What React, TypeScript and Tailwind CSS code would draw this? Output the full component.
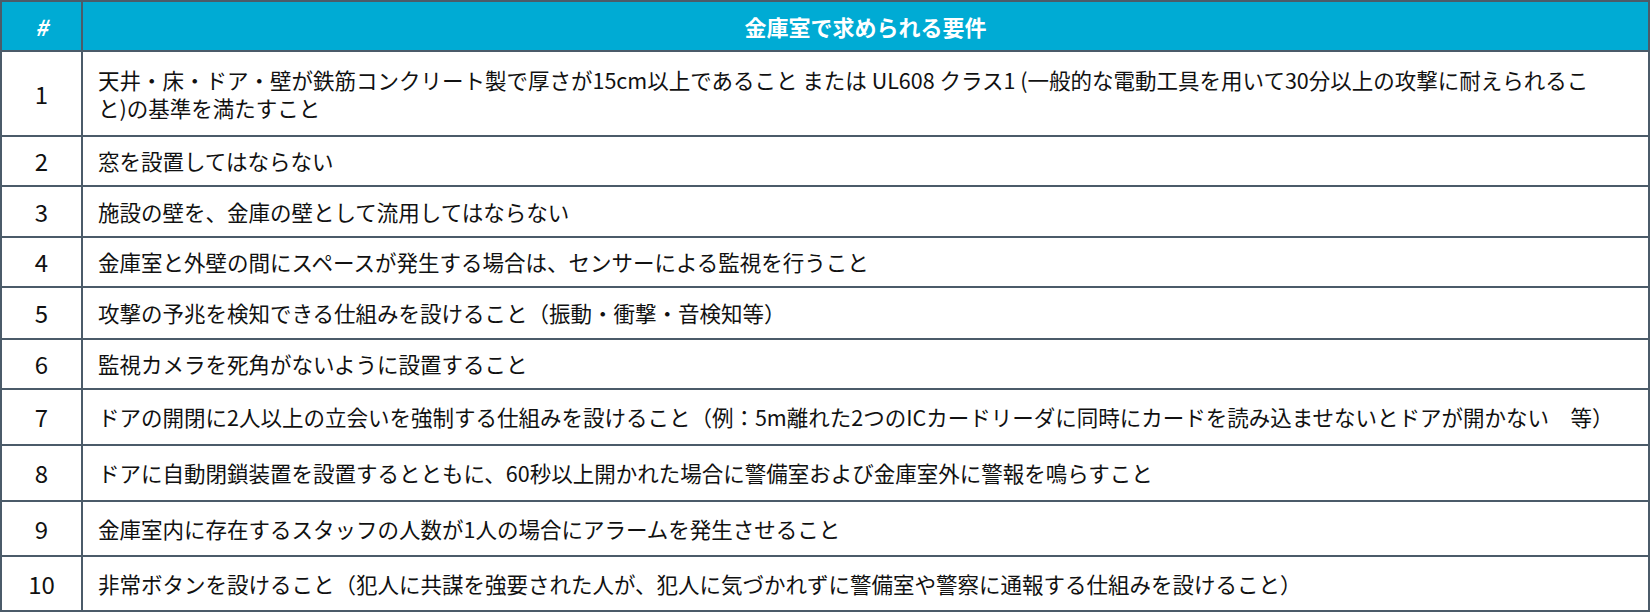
import React from "react";

type Row = { no: number; text: React.ReactNode; h: string };

const rows: Row[] = [
  {
    no: 1,
    h: "h-[85px]",
    text: (
      <>
        天井・床・ドア・壁が鉄筋コンクリート製で厚さが15cm以上であること または UL608 クラス1 (一般的な電動工具を用いて30分以上の攻撃に耐えられるこ
        <br />
        と)の基準を満たすこと
      </>
    ),
  },
  { no: 2, h: "h-[50px]", text: "窓を設置してはならない" },
  { no: 3, h: "h-[51px]", text: "施設の壁を、金庫の壁として流用してはならない" },
  { no: 4, h: "h-[50px]", text: "金庫室と外壁の間にスペースが発生する場合は、センサーによる監視を行うこと" },
  { no: 5, h: "h-[52px]", text: "攻撃の予兆を検知できる仕組みを設けること（振動・衝撃・音検知等）" },
  { no: 6, h: "h-[50px]", text: "監視カメラを死角がないように設置すること" },
  {
    no: 7,
    h: "h-[56px]",
    text: "ドアの開閉に2人以上の立会いを強制する仕組みを設けること（例：5m離れた2つのICカードリーダに同時にカードを読み込ませないとドアが開かない\u3000等）",
  },
  {
    no: 8,
    h: "h-[56px]",
    text: "ドアに自動閉鎖装置を設置するとともに、60秒以上開かれた場合に警備室および金庫室外に警報を鳴らすこと",
  },
  { no: 9, h: "h-[55px]", text: "金庫室内に存在するスタッフの人数が1人の場合にアラームを発生させること" },
  {
    no: 10,
    h: "h-[55px]",
    text: "非常ボタンを設けること（犯人に共謀を強要された人が、犯人に気づかれずに警備室や警察に通報する仕組みを設けること）",
  },
];

export default function App() {
  return (
    <div
      className="bg-white w-[1652px] h-[614px] text-[#111]"
      style={{ fontFamily: '"Noto Sans CJK JP", "Noto Sans", sans-serif' }}
    >
      <table className="w-[1650px] border-collapse border-2 border-[#4b5b69] table-fixed">
        <colgroup>
          <col className="w-[81px]" />
          <col />
        </colgroup>
        <thead>
          <tr className="h-[50px] bg-[#00abd4] text-white font-bold text-[22px]">
            <th className="border-2 border-[#4b5b69] text-center italic">#</th>
            <th className="border-2 border-[#4b5b69] text-center">金庫室で求められる要件</th>
          </tr>
        </thead>
        <tbody>
          {rows.map((r) => (
            <tr key={r.no} className={r.h}>
              <td className="border-2 border-[#4b5b69] text-center text-[24px]">{r.no}</td>
              <td className="border-2 border-[#4b5b69] pl-[15px] pr-2 text-[21.5px] leading-[28px]">
                {r.text}
              </td>
            </tr>
          ))}
        </tbody>
      </table>
    </div>
  );
}
